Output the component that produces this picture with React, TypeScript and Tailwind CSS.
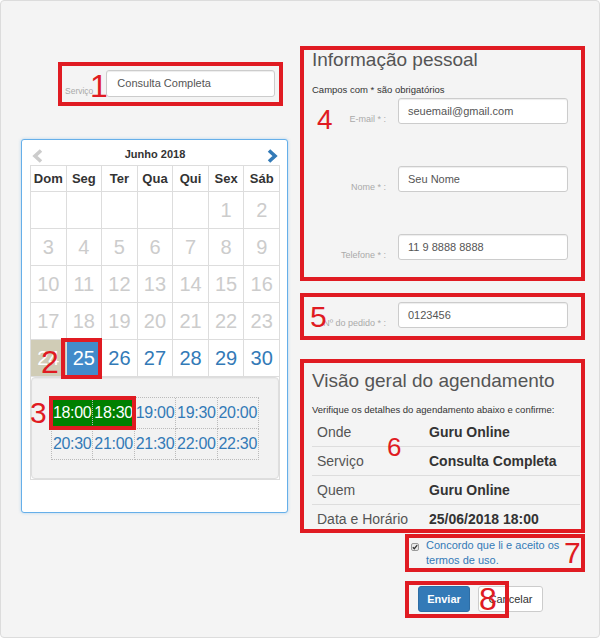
import React from "react";

function Field({ label, value, className }: { label: string; value: string; className: string }) {
  return (
    <div className={"flex items-end " + className}>
      <span className="w-[74px] text-right text-[9px] leading-[11px] text-[#aaaaaa] -mb-px whitespace-nowrap">{label}</span>
      <div className="ml-[12px] w-[170px] h-[26px] bg-white border border-[#cccccc] rounded-[3px] pl-[9px] text-[11px] text-[#555555] flex items-center shadow-[inset_0_1px_1px_rgba(0,0,0,0.075)]">
        {value}
      </div>
    </div>
  );
}

function Box({ className }: { className: string }) {
  return <div className={"absolute border-[4px] border-[#e01b22] pointer-events-none " + className} />;
}

function Num({ n, className }: { n: string; className: string }) {
  return (
    <span className={"absolute leading-none text-[#e01b22] font-['Liberation_Sans',Arial,sans-serif] pointer-events-none " + className}>
      {n}
    </span>
  );
}

const rows: (number | null)[][] = [
  [null, null, null, null, null, 1, 2],
  [3, 4, 5, 6, 7, 8, 9],
  [10, 11, 12, 13, 14, 15, 16],
  [17, 18, 19, 20, 21, 22, 23],
  [24, 25, 26, 27, 28, 29, 30],
];

const times = ["18:00", "18:30", "19:00", "19:30", "20:00", "20:30", "21:00", "21:30", "22:00", "22:30"];

export default function App() {
  return (
    <div className="relative w-[600px] h-[638px] bg-[#f4f4f4] border border-[#dcdcdc] rounded-[4px] flex overflow-hidden font-['Liberation_Sans',Arial,sans-serif]">
      {/* Left column */}
      <div className="ml-[20px] w-[267px] flex flex-col shrink-0">
        <div className="mt-[69px] flex items-end h-[27px]">
          <span className="ml-[44px] text-[8.5px] leading-[10px] text-[#aaaaaa] mb-px">Serviço</span>
          <div className="ml-[13px] w-[169px] h-[27px] bg-white border border-[#cccccc] rounded-[3px] pl-[10px] text-[11px] text-[#555555] flex items-center shadow-[inset_0_1px_1px_rgba(0,0,0,0.075)]">
            Consulta Completa
          </div>
        </div>

        <div className="mt-[42px] w-[267px] h-[374px] bg-white border border-[#66afe9] rounded-[3px] pl-[8px] shadow-[0_0_3px_rgba(102,175,233,0.5)]">
          <div className="w-[250px] h-[25px] flex justify-between items-start">
            <svg className="ml-[2px] mt-[9px]" width="11" height="14" viewBox="0 0 11 14">
              <polyline points="9,1.5 3,7 9,12.5" fill="none" stroke="#cccccc" strokeWidth="3.6" />
            </svg>
            <span className="mt-[7px] text-[11px] leading-[14px] font-bold text-[#333333]">Junho 2018</span>
            <svg className="mr-[2px] mt-[9px]" width="11" height="14" viewBox="0 0 11 14">
              <polyline points="2,1.5 8,7 2,12.5" fill="none" stroke="#337ab7" strokeWidth="3.6" />
            </svg>
          </div>
          <div className="w-[250px] grid grid-cols-7 border-l border-t border-[#dddddd]">
            {["Dom", "Seg", "Ter", "Qua", "Qui", "Sex", "Sáb"].map((d) => (
              <div key={d} className="h-[26px] border-r border-b border-[#dddddd] flex items-center justify-center text-[13px] leading-[15px] font-bold text-[#333333]">
                {d}
              </div>
            ))}
            {rows.flat().map((d, i) => {
              let cls = "text-[#cccccc]";
              if (d === 24) cls = "bg-[#d0ccb6] text-white";
              else if (d === 25) cls = "bg-[#428bca] text-white";
              else if (d !== null && d > 25) cls = "text-[#337ab7]";
              return (
                <div key={i} className={"h-[37px] border-r border-b border-[#dddddd] flex items-center justify-center text-[20px] leading-[22px] " + cls}>
                  {d ?? ""}
                </div>
              );
            })}
            <div className="col-span-7 h-[103px] border-r border-b border-[#dddddd]">
              <div className="h-[102px] bg-[#f2f2f2] border border-[#dedede] rounded-[4px] flex justify-center pt-[19px] shadow-[inset_0_1px_1px_rgba(0,0,0,0.04)]">
                <div className="w-[208px] h-[63px] grid grid-cols-5 border-l border-t border-dotted border-[#bbbbbb]">
                  {times.map((t, i) => (
                    <div
                      key={t}
                      className={
                        "h-[31px] border-r border-b border-dotted border-[#bbbbbb] flex items-center justify-center text-[16px] leading-[18px] tracking-[-0.3px] " +
                        (i < 2 ? "bg-[#008000] text-white" : "text-[#337ab7]")
                      }
                    >
                      {t}
                    </div>
                  ))}
                </div>
              </div>
            </div>
          </div>
        </div>
      </div>

      {/* Right column */}
      <div className="ml-[24px] w-[268px] flex flex-col shrink-0">
        <div className="mt-[48px] text-[19px] leading-[22px] text-[#555555]">Informação pessoal</div>
        <div className="mt-[13px] text-[9.5px] leading-[12px] text-[#333333]">Campos com * são obrigatórios</div>
        <Field className="mt-[2px]" label="E-mail * :" value="seuemail@gmail.com" />
        <Field className="mt-[42px]" label="Nome * :" value="Seu Nome" />
        <Field className="mt-[42px]" label="Telefone * :" value="11 9 8888 8888" />
        <Field className="mt-[42px]" label="Nº do pedido * :" value="0123456" />

        <div className="mt-[42px] text-[19px] leading-[22px] text-[#555555]">Visão geral do agendamento</div>
        <div className="mt-[12px] text-[9.5px] leading-[12px] text-[#333333]">Verifique os detalhes do agendamento abaixo e confirme:</div>
        <div className="mt-[2px] flex flex-col">
          {[
            ["Onde", "Guru Online"],
            ["Serviço", "Consulta Completa"],
            ["Quem", "Guru Online"],
            ["Data e Horário", "25/06/2018 18:00"],
          ].map(([k, v], i) => (
            <div
              key={k}
              className={"grid grid-cols-[117px_1fr] items-center " + (i === 0 ? "h-[28px]" : "h-[29px] border-t border-[#dddddd]")}
            >
              <span className="pl-[5px] text-[14px] leading-[16px] text-[#555555] whitespace-nowrap">{k}</span>
              <span className="text-[14px] leading-[16px] font-bold text-[#333333] whitespace-nowrap">{v}</span>
            </div>
          ))}
        </div>

        <div className="mt-[5px] flex items-start">
          <svg className="ml-[99px] mt-[5px] shrink-0" width="8" height="8" viewBox="0 0 8 8">
            <rect x="0.5" y="0.5" width="7" height="7" rx="1.5" fill="#e9e9e9" stroke="#9a9a9a" />
            <polyline points="1.8,4.2 3.3,5.7 6.2,2.2" fill="none" stroke="#333333" strokeWidth="1.3" />
          </svg>
          <span className="ml-[7px] w-[145px] text-[11px] leading-[15px] text-[#337ab7]">Concordo que li e aceito os termos de uso.</span>
        </div>

        <div className="mt-[18px] ml-[106px] flex">
          <div className="w-[52px] h-[26px] bg-[#337ab7] border border-[#2e6da4] rounded-[3px] text-white text-[11px] font-bold flex items-center justify-center">
            Enviar
          </div>
          <div className="ml-[8px] w-[65px] h-[26px] bg-white border border-[#cccccc] rounded-[3px] text-[#333333] text-[11px] flex items-center justify-center">
            Cancelar
          </div>
        </div>
      </div>

      {/* Annotation overlays */}
      <Box className="left-[57px] top-[61px] w-[225px] h-[44px]" />
      <Box className="left-[60px] top-[337px] w-[41px] h-[41px]" />
      <Box className="left-[48px] top-[395px] w-[87px] h-[34px]" />
      <Box className="left-[299px] top-[45px] w-[285px] h-[235px]" />
      <Box className="left-[299px] top-[292px] w-[285px] h-[47px]" />
      <Box className="left-[299px] top-[358px] w-[285px] h-[174px]" />
      <Box className="left-[404px] top-[533px] w-[180px] h-[38px]" />
      <Box className="left-[404px] top-[580px] w-[104px] h-[37px]" />

      <Num n="1" className="left-[89px] top-[69px] text-[32px]" />
      <Num n="2" className="left-[40px] top-[345px] text-[32px]" />
      <Num n="3" className="left-[29px] top-[397px] text-[30px]" />
      <Num n="4" className="left-[316px] top-[105px] text-[28px]" />
      <Num n="5" className="left-[309px] top-[301px] text-[30px]" />
      <Num n="6" className="left-[386px] top-[433px] text-[26px]" />
      <Num n="7" className="left-[563px] top-[537px] text-[30px]" />
      <Num n="8" className="left-[478px] top-[582px] text-[32px]" />
    </div>
  );
}
